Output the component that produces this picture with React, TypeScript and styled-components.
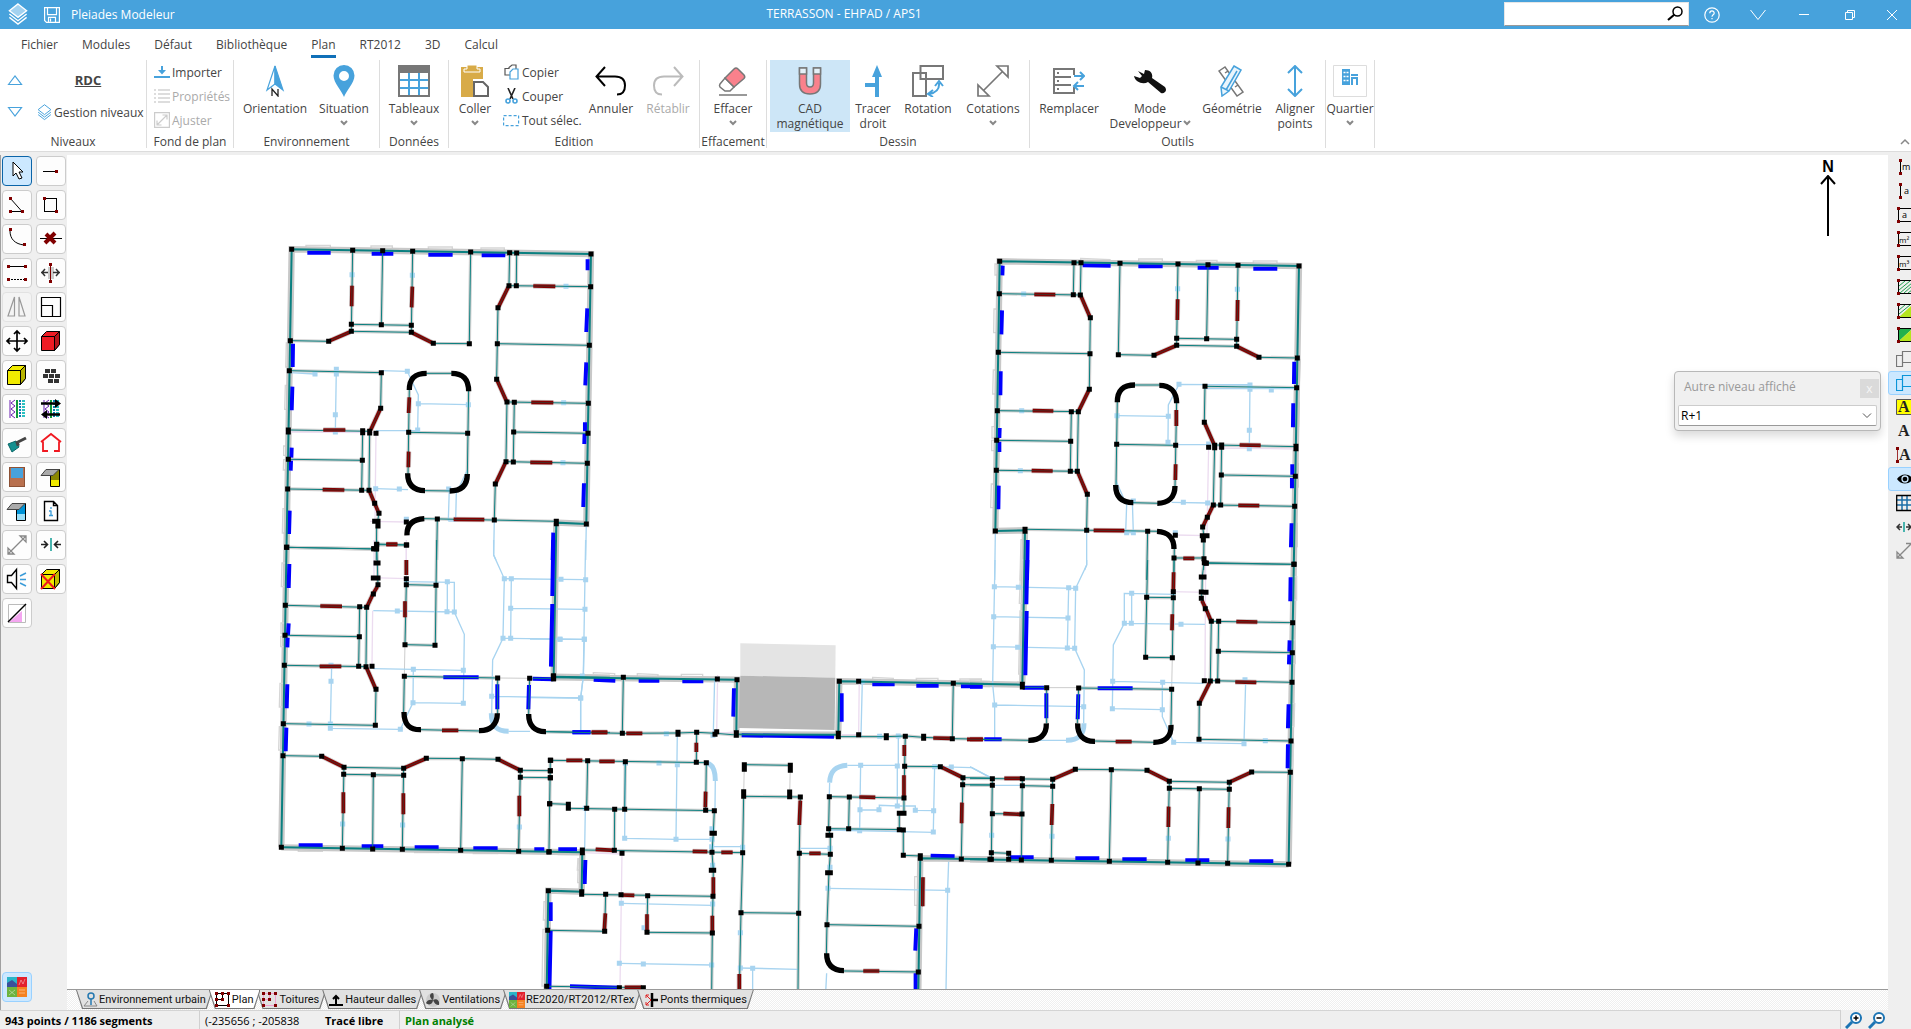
import React from "react";
import styled, { createGlobalStyle, css } from "styled-components";

const BLUE = "#47a2dc";
const GREY = "#777";
const TEAL = "#0a8080";

const Global = createGlobalStyle`
  html, body, #root { height: 100%; }
  body { margin: 0; overflow: hidden; background: #fff; }
  * { box-sizing: border-box; }
  button, input, select { font: inherit; color: inherit; }
`;

const Shell = styled.div`
  height: 100%;
  display: flex;
  flex-direction: column;
  font: 12px/15px "Open Sans", "Noto Sans", sans-serif;
  color: #444;
`;

/* ---------- title bar ---------- */

const TitleBar = styled.header`
  display: flex;
  height: 29px;
  flex: none;
  background: ${BLUE};
  color: #fff;
  overflow: hidden;
`;
const TitleLeft = styled.div`
  width: 184px;
  display: flex;
  align-items: center;
  padding-left: 8px;
  svg { margin-right: 16px; }
  svg + svg { margin-right: 11px; }
`;
const DocTitle = styled.h1`
  flex: 1;
  margin: 0;
  font-size: 12px;
  font-weight: 400;
  line-height: 28px;
  text-align: center;
`;
const SearchBox = styled.label`
  width: 185px;
  height: 24px;
  margin-top: 2px;
  display: flex;
  align-items: center;
  background: #fff;
  border: 1px solid #e6e6e6;
  border-bottom-color: #999;
  padding-right: 5px;
`;
const SearchInput = styled.input`
  flex: 1;
  min-width: 0;
  border: 0;
  outline: 0;
  background: transparent;
  color: #222;
`;
const TitleButton = styled.button<{ $w?: number }>`
  width: ${(p) => p.$w ?? 46}px;
  border: 0;
  padding: 0;
  background: none;
  display: flex;
  align-items: center;
  justify-content: center;
`;

/* ---------- menu ---------- */

const Menu = styled.nav`
  display: flex;
  flex: none;
  height: 29px;
  padding: 6px 0 0 21px;
  gap: 24px;
`;
const MenuItem = styled.button<{ $on?: boolean }>`
  border: 0;
  border-bottom: 3px solid ${(p) => (p.$on ? "#1070b8" : "transparent")};
  background: none;
  padding: 2px 0 3px;
  line-height: 15px;
`;

/* ---------- ribbon ---------- */

const Ribbon = styled.section`
  display: flex;
  flex: none;
  height: 97px;
  padding: 2px 0 5px;
  background: #fff;
  border-bottom: 3px solid #efefef;
  box-shadow: inset 0 -1px #dcdcdc;
`;
const Group = styled.div<{ $w: number }>`
  width: ${(p) => p.$w}px;
  height: 88px;
  border-right: 1px solid #ddd;
  display: flex;
  flex-direction: column;
`;
const GroupBody = styled.div<{ $pad?: number }>`
  display: flex;
  flex: none;
  height: 72px;
  padding-left: ${(p) => p.$pad ?? 0}px;
`;
const GroupName = styled.div`
  text-align: center;
  line-height: 20px;
  white-space: nowrap;
`;
const BigButton = styled.button<{ $w: number; $on?: boolean; $off?: boolean }>`
  width: ${(p) => p.$w}px;
  height: 72px;
  border: 0;
  padding: 5px 0 0;
  display: flex;
  flex-direction: column;
  align-items: center;
  gap: 4px;
  white-space: pre;
  background: ${(p) => (p.$on ? "#cde6f7" : "none")};
  color: ${(p) => (p.$off ? "#aaa" : "inherit")};
  > svg { flex: none; }
`;
const Caption = styled.span`
  display: flex;
  flex-direction: column;
  align-items: center;
  line-height: 15px;
  svg { margin-top: 4px; }
`;
const CaptionRow = styled.span`
  display: flex;
  gap: 1px;
`;
const SmallList = styled.div<{ $w?: number; $pad?: number }>`
  width: ${(p) => (p.$w ? p.$w + "px" : "auto")};
  padding-left: ${(p) => p.$pad ?? 0}px;
  display: flex;
  flex-direction: column;
`;
const SmallButton = styled.button<{ $off?: boolean }>`
  height: 24px;
  border: 0;
  background: none;
  padding: 0;
  display: flex;
  align-items: center;
  gap: 2px;
  white-space: nowrap;
  color: ${(p) => (p.$off ? "#aaa" : "inherit")};
  svg { flex: none; }
`;
const LevelGrid = styled.div`
  display: grid;
  grid-template-columns: 30px 1fr;
  grid-template-rows: 40px 24px;
  width: 100%;
  align-items: center;
  justify-items: center;
`;
const LevelName = styled.strong`
  text-decoration: underline;
  font-size: 13px;
`;
const LevelLeft = styled(SmallButton)`
  justify-self: start;
  padding-left: 7px;
`;
const PlainButton = styled.button`
  border: 0;
  padding: 0;
  background: none;
  display: flex;
`;
const Collapse = styled(PlainButton)`
  margin-left: auto;
  align-self: flex-end;
  padding: 0 1px 1px 0;
`;

/* ---------- work area ---------- */

const Work = styled.main`
  flex: 1;
  min-height: 0;
  display: flex;
  background: #efefef;
`;
const LeftBar = styled.aside`
  width: 67px;
  flex: none;
  display: flex;
  flex-direction: column;
  justify-content: space-between;
  padding: 1px 1px 8px 1px;
  border-left: 1px solid #a0a0a0;
`;
const ToolGrid = styled.div`
  display: grid;
  grid-template-columns: 30px 30px;
  gap: 4px;
`;
const Tool = styled.button<{ $on?: boolean; $off?: boolean }>`
  width: 30px;
  height: 30px;
  padding: 0;
  border: 1px solid ${(p) => (p.$on ? "#0a64a8" : p.$off ? "#e2e2e2" : "#ccc")};
  border-radius: 4px;
  background: ${(p) => (p.$on ? "#cce8ff" : p.$off ? "#f4f4f4" : "#fdfdfd")};
  display: flex;
  align-items: center;
  justify-content: center;
  svg { flex: none; }
`;
const PictureTool = styled(Tool)`
  border-color: #99d1ff;
`;
const Center = styled.div`
  flex: 1;
  min-width: 0;
  display: flex;
  flex-direction: column;
`;
const Canvas = styled.div`
  flex: 1;
  min-height: 0;
  position: relative;
  overflow: hidden;
  background: #fff;
`;
const Drawing = styled.svg`
  display: block;
  width: 100%;
  height: 100%;
`;
const North = styled.div`
  position: absolute;
  top: 4px;
  right: 50px;
  width: 20px;
  display: flex;
  flex-direction: column;
  align-items: center;
  font: bold 16px/16px "Liberation Sans", Arial, sans-serif;
  color: #000;
`;
const Panel = styled.section`
  position: absolute;
  top: 216px;
  right: 7px;
  width: 207px;
  padding: 7px 3px 4px;
  background: #f0f0f0;
  border: 1px solid #b8b8b8;
  border-radius: 4px;
  box-shadow: 0 5px 10px rgba(0, 0, 0, 0.15);
`;
const PanelHead = styled.div`
  display: flex;
  justify-content: space-between;
  color: #999;
  padding: 0 2px 0 6px;
  height: 26px;
`;
const PanelTitle = styled.label`
  line-height: 16px;
`;
const PanelClose = styled.button`
  width: 19px;
  height: 19px;
  margin-right: -4px;
  border: 0;
  padding: 0;
  background: #dadada;
  color: #f6f6f6;
  line-height: 15px;
`;
const SelectWrap = styled.div`
  display: flex;
  align-items: center;
  height: 21px;
  background: #fff;
  border: 1px solid #ccc;
  border-bottom-color: #999;
  border-radius: 2px;
  padding-right: 4px;
`;
const Select = styled.select`
  appearance: none;
  flex: 1;
  border: 0;
  outline: 0;
  background: transparent;
  padding: 0 2px;
  color: #000;
`;
const RightBar = styled.aside`
  width: 23px;
  flex: none;
  overflow: hidden;
  display: flex;
  flex-direction: column;
`;
const Option = styled.button<{ $on?: boolean }>`
  width: 34px;
  height: 24px;
  flex: none;
  padding: 0 0 0 7px;
  border: 1px solid transparent;
  border-radius: 3px;
  background: none;
  display: flex;
  align-items: center;
  ${(p) => p.$on && css`background: #cce8ff; border-color: #99d1ff;`}
`;

/* ---------- tabs and status ---------- */

const TabStrip = styled.div`
  height: 21px;
  flex: none;
  display: flex;
  align-items: flex-start;
  padding-left: 9px;
  border-top: 1px solid #999;
  background: repeating-conic-gradient(#fff 0 25%, #efefef 0 50%) 0 0 / 2px 2px;
`;
const Tab = styled.button<{ $on?: boolean }>`
  position: relative;
  z-index: ${(p) => (p.$on ? 2 : 1)};
  isolation: isolate;
  height: 19px;
  border: 0;
  padding: 0 7px 0 6px;
  margin-right: -4px;
  background: none;
  color: #111;
  font: 11px/15px Roboto, "Open Sans", sans-serif;
  display: flex;
  align-items: center;
  gap: 1px;
  white-space: nowrap;
  &::before, &::after {
    content: "";
    position: absolute;
    inset: 0;
    z-index: -2;
    background: #777;
    clip-path: polygon(0 0, 100% 0, calc(100% - 6px) 100%, 6px 100%);
  }
  &::after {
    inset: 0 1px 1px 1px;
    z-index: -1;
    background: ${(p) => (p.$on ? "#fff" : "#e1e1e1")};
  }
`;
const StatusBar = styled.footer`
  height: 19px;
  flex: none;
  display: flex;
  background: #efefef;
  color: #000;
`;
const StatusCell = styled.div<{ $w?: number; $bold?: boolean; $green?: boolean; $rule?: boolean }>`
  ${(p) => (p.$w ? `width: ${p.$w}px;` : "flex: 1;")}
  border-top: 1px solid #d4d4d4;
  border-right: ${(p) => (p.$rule ? "1px solid #d0d0d0" : "0")};
  padding-left: 5px;
  line-height: 19px;
  font-size: 11px;
  white-space: nowrap;
  overflow: hidden;
  font-weight: ${(p) => (p.$bold ? 700 : 400)};
  color: ${(p) => (p.$green ? "#008000" : "inherit")};
`;
const StatusZoom = styled.div`
  display: flex;
  gap: 6px;
  align-items: center;
  padding: 1px 18px 0 4px;
  width: 70px;
`;

/* ---------- floor plan drawing ---------- */

type Sector = {
  at: [number, number];
  thick?: string;
  thin?: string;
  doors?: string;
  windows?: string;
  frames?: string;
  arcs?: string;
  ghost?: string;
  ghostArcs?: string;
  ghostNodes?: string;
  pink?: string;
  faint?: string;
  nodes?: string;
};

/* Each sector is drawn in thirds of a pixel from its own origin. */
const sectors: Sector[] = [
  {
    at: [203, 75],
    thick: "M34 1852L65 58L963 72L949 882L859 878L851 1342",
    thin: "M248 61L244 304M338 62L334 284M428 64L424 307M602 67L598 341M244 283L424 286M61 332L176 334L244 304L424 307L490 340L598 341M719 68L717 167M740 69L739 167M717 167L962 170M717 167L684 233L682 341L680 448L711 516L708 695L676 762L673 870M682 341L958 346M711 516L955 520M733 517L730 696M731 606L954 610M708 695L952 700M459 866L859 874M502 867L500 990M58 422L334 428L332 535L299 604L297 781L314 820L327 850L320 890L319 990M55 600L299 604M278 603L275 781M55 688L277 691M53 777L297 781M50 952L318 957M320 942L410 945M465 430H545M418 475L414 740M596 475L592 740M460 782L545 783M416 607L593 610",
    doors: "M246 167L245 229M427 170L425 232M180 332L240 306M428 309L486 338M715 171L686 230M790 168L856 169M682 452L709 512M784 517L850 518M781 697L847 698M706 699L678 758M330 539L302 600M160 600L226 600M158 779L223 780M299 785L325 846M418 502L416 549M416 665L415 712M551 868L643 869M349 943L382 943",
    windows: "M112 68H182M305 71H370M475 74H548M635 76H706M953 88V121M952 235L949 306M949 397L946 466M945 577V604M944 610L943 642M942 760L940 831M69 341L68 411M67 470L65 541M65 653L64 683M63 692L62 722M59 842L57 912M850 908L848 990",
    frames: "M108 46H181V58H108ZM303 48H367V60H303ZM475 51H547V63H475ZM633 54H703V66H633ZM49 339H60L57 411H47ZM46 466H57L55 538H44ZM41 648H54V676H41ZM41 689H53V720H40ZM39 836H52L49 909H37Z",
    arcs: "M470 430C435 430 418 445 418 480M544 430C580 430 596 448 596 484M413 730C413 765 430 782 465 782M592 732C592 765 575 783 539 783M463 866C426 868 410 885 411 916",
    ghost: "M199 418L196 606M60 428L134 432M334 422L412 424L445 495L443 600M445 521L595 524M443 602L318 602M317 776L414 779M538 777L535 873M559 790L557 873H535M592 720L559 790M673 870L671 975L678 990M949 882L947 990",
    ghostNodes: "246,134 427,136 888,169 199,418 199,432 135,432 412,424 196,554 445,521 443,600 595,524 881,518 879,698 388,777 317,776 536,777 409,868 409,873 196,606",
    pink: "M318 608L315 875M45 606L318 608M300 874L409 876M409 945V990",
    nodes: "65,58 248,61 338,62 428,64 602,66 719,68 740,69 963,72 717,167 739,167 962,170 244,283 334,284 424,286 244,304 424,307 61,332 176,334 490,340 598,341 684,233 682,341 958,346 680,448 711,516 733,517 955,520 731,606 954,610 708,695 730,696 952,700 676,762 673,870 859,874 859,881 949,882 502,867 58,422 334,428 332,535 278,602 278,608 299,604 299,609 318,610 55,600 55,606 55,688 277,691 53,777 275,781 297,781 314,820 327,850 314,874 324,874 324,888 409,876 50,952 320,943 312,956 319,957 410,945 416,607 593,610",
  },
  {
    at: [203, 385],
    thick: "M34 922L937 937M851 410L1020 413",
    thin: "M50 22L318 27M320 14L409 15M320 0L322 69L324 134L290 202L288 379L318 448L316 556M46 196L290 202M269 200L266 379M45 286L268 290M43 376L288 380M40 551L316 556M409 116V134L405 314L495 316M409 134L498 136M500 0L496 316M403 409L683 414V530M403 409L401 520M450 569L630 573M779 415L776 525M825 575L1020 578M788 415H851M39 647L155 649L222 682L401 685L469 655L577 656L684 658L751 691L841 692M221 703L401 706M751 712L841 713M222 682L217 925M310 704L308 927M401 685L397 928M577 656L572 931M751 691L746 934M841 661L837 936",
    doors: "M349 13H382M409 60V105M405 184V232M322 140L310 160M308 164L292 198M151 198L216 199M149 379H214M290 384L316 444M516 571H565M965 577H1012M159 651L218 680M405 683L465 657M688 660L747 689M220 757V820M400 760V823M748 767V829",
    windows: "M58 72L56 144M56 250L54 285M53 293L52 322M52 433L50 505M49 563L47 634M850 0L847 168M847 192L843 380M520 412H626M788 416L850 418M682 433V508M777 435L775 508M908 577H962M86 916H158M275 919H340M434 922H506M610 925H683M793 928H823M865 928H921",
    frames: "M36 69H48L46 140H34ZM33 249H45V281H33ZM32 289H44V320H32ZM30 430H43L40 501H28ZM28 560H40L38 630H26ZM85 924H157V934H85ZM434 928H506V938H434ZM610 931H683V941H610ZM865 934H921V944H865ZM924 956H936L934 990H922Z",
    arcs: "M402 516C402 555 420 570 453 569M682 520C682 555 660 573 627 572M776 522C776 558 795 576 828 575",
    ghost: "M671 0V45L703 116L945 119M703 116L699 295L668 360L665 525M724 116L722 295M699 295L943 298M722 205L945 208M947 0L940 408L932 474V570M665 469L932 474M402 125L553 127V216L583 283L580 490L429 488L430 388L580 391M310 212L553 216M532 125V216M310 386L430 388M429 488L391 568L181 565L185 376M715 574H780",
    ghostArcs: "M664 520C664 560 682 574 716 574",
    ghostNodes: "703,116 724,116 873,118 947,119 722,205 945,208 699,295 722,295 870,298 943,298 532,125 382,213 531,215 553,216 430,388 580,391 429,488 580,490 183,424 183,376 181,552 181,565 117,552 391,568 665,469 932,474 218,852 398,855 748,861 937,408",
    pink: "M312 0V114M308 212L306 380M302 113L409 116M409 0V116",
    faint: "M405 314L403 409M683 414L779 415M322 69V134",
    nodes: "50,22 311,26 320,26 320,14 409,15 318,69 324,69 310,114 324,114 324,134 310,162 409,116 409,134 498,136 46,196 269,200 290,202 45,286 268,290 43,376 266,379 288,380 306,379 318,448 40,551 316,556 405,314 495,316 403,409 683,414 779,415 851,408 851,416 39,647 155,649 222,682 401,685 469,655 577,656 684,658 751,691 841,692 841,661 221,703 310,704 401,706 751,712 841,713 839,791 34,922 217,925 308,927 397,928 572,931 746,934 837,936",
  },
  {
    at: [463, 475],
    thick: "M70 142L621 149L619 313L925 314L928 154L1380 162M157 662L155 785L55 782L50 1090M1380 688L1171 685L1165 1090",
    thin: "M45 305L277 310L444 309L500 307L558 310L619 315M280 142L277 310M500 307L499 397M62 391L529 398L527 541M173 392L170 535M286 395L284 538M59 521L114 523V535L553 542L550 610L546 667L550 721L549 799L547 909L545 1090M254 538L253 661M157 660L638 668M155 793L549 799M227 793L224 904L53 901M353 797L351 907L547 909M50 1069L340 1073M643 404L781 406M641 499L811 501L808 670L806 850L804 1090M641 499L638 668L633 848L628 1090M633 848L806 850M808 670L901 673M898 500L1122 504M958 501L956 596M898 500L896 596L1120 599M896 596L901 620V672L897 728L891 884L889 980M891 884L1167 889M940 1023L1165 1026M925 320L1069 320L1126 318L1181 322L1267 326L1380 328M1270 160L1267 326M1126 318L1122 504V550H1108V599H1120V676L1171 678M1124 409L1231 410L1299 443L1380 444M1298 464L1380 465M1299 443L1294 687M928 154H986",
    doors: "M185 307H232M289 310H337M109 391H157M208 394H254M499 338V366M527 485L526 532M197 658L253 661M488 664L532 665M574 667H608M550 742V793M547 857V907M274 795L313 796M226 850L223 902M351 853V903M284 1072H335M628 1032V1090M811 512L808 585M838 670H872M988 501L1036 502M1123 345V378M1122 436V500M1236 412L1295 441M1296 518L1295 580M1179 742L1178 829M1000 1023H1048M1210 324L1260 325M1311 328H1359",
    windows: "M191 149L256 152M326 152H388M457 154H520M612 175L610 260M635 316L912 320M935 190V275M1027 163H1094M1159 167H1226M1293 169H1357M166 690L164 762M62 817V873M62 902L58 1090M120 1069L268 1073M1159 895L1156 962M1157 1030V1090M1202 677L1274 679M127 307H181",
    frames: "M190 128L254 131V143H190ZM322 131L384 134V146H322ZM454 133H518V146H454ZM1028 142L1090 145V157H1028ZM1159 145H1224V158H1159ZM1290 147H1354V160H1290ZM145 686H155V758H143ZM42 815H52V870H40ZM39 898H48L45 1068H36ZM1154 740H1168V826H1154Z",
    arcs: "M890 970C890 1005 908 1022 942 1022",
    ghost: "M0 27L163 28L160 140L152 204V305M0 203L152 204M554 145L550 310M442 310L438 628L284 625L286 395M438 628H550M274 820L545 826M268 1000L545 1005M166 535L164 660M555 540L556 450M545 650H638M806 655H901M668 1015V1090M628 1014L804 1018M894 775L1253 781L1248 1090M1256 695L1253 781M899 458L898 500M952 406H1102V528L1048 526V540H990M992 406L989 602M896 600L1210 607L1214 410L1325 413L1380 442M1102 528H1156V541L1211 542M1105 316V406M997 155L993 320M890 1030L887 1090",
    ghostArcs: "M529 399C550 402 556 425 556 453M952 406C915 408 900 425 899 458",
    ghostNodes: "90,28 163,28 152,204 387,399 409,311 442,404 284,625 438,628 546,596 546,628 548,706 548,822 545,650 638,652 274,820 268,1000 340,1002 545,1005 342,893 631,908 631,1014 668,1015 900,655 900,712 894,775 1253,781 992,406 1102,408 990,539 1047,539 1102,528 1156,541 1211,542 1210,606 989,602 1264,411 1214,410 1049,319 1105,318 997,155 166,535 286,400 549,316",
    pink: "M563 135L560 310L619 306M988 145L986 314H925M276 670L270 1070M157 668L276 672",
    faint: "M643 404L641 499M781 406L779 499",
    nodes: "70,138 70,146 280,142 562,147 621,149 619,308 619,316 277,310 444,307 444,313 500,307 560,305 555,313 499,397 529,398 62,391 173,392 286,395 61,422 61,443 59,521 115,523 115,535 170,535 254,538 284,538 527,541 553,542 546,610 553,610 546,667 544,721 551,721 549,799 547,909 253,661 276,670 157,660 157,668 57,665 155,785 155,793 55,782 227,793 273,794 353,797 53,901 224,904 351,907 50,1069 268,1073 340,1073 638,668 643,404 643,418 781,406 781,421 641,485 641,499 779,486 779,500 811,501 808,670 633,848 806,850 901,673 894,616 902,616 893,728 901,728 898,500 958,501 1122,504 896,596 956,596 1108,599 1120,600 1108,550 1122,550 1120,676 1171,677 1171,685 1294,687 1380,688 891,884 1167,889 1165,1026 928,154 986,154 1270,160 925,310 925,320 986,314 1069,317 1069,323 1126,319 1181,319 1181,325 1267,326 1124,409 1231,410 1299,443 1298,464",
  },
  {
    at: [903, 95],
    thick: "M956 1843L987 48L89 34L76 843L165 841L157 1303",
    thin: "M312 38L310 134M333 38L331 135M88 131L331 135L361 203L358 418L325 485L322 664L352 733L350 841M85 307L360 311M82 482L325 485M304 485L301 664M80 571L302 574M79 661L322 664M450 40L445 314L552 316L620 286L800 289L867 322L982 324M624 42L620 286M714 44L710 266M804 46L800 289M620 265L800 268M165 838L568 844M705 409L980 413M705 409L703 517L734 587L730 765L698 831L702 860L701 960M755 587L752 765M734 585L978 590M754 675L976 679M730 765L974 769M708 938L972 943M612 924H702M613 890L612 990M533 844L530 990M490 405H575M442 450L438 710M620 455L615 715M480 758L570 760M440 583L617 586",
    doors: "M193 133L256 134M333 139L359 199M356 422L327 481M188 482L250 483M185 662L248 663M324 668L350 729M371 841L463 842M623 148L622 210M803 150L802 213M556 314L616 288M804 291L863 320M619 480V528M617 643L616 690M705 521L732 583M809 585L872 586M805 766L868 767M728 769L713 800M711 804L700 827M640 925H673",
    windows: "M98 47L97 76M96 181L94 253M92 364L91 436M89 534L88 564M88 575V606M86 707L85 778M338 46L422 47M505 49H578M683 53H746M850 56H922M973 335L972 402M970 460L969 532M967 643V674M966 684V715M965 820L963 892M173 870L171 990",
    frames: "M75 42H87V75H75ZM72 177H85L83 248H71ZM70 360H82L80 432H68ZM66 530H78V564H66ZM65 571H78V602H65ZM64 702H76L74 773H62ZM332 25L420 29V40H332ZM506 27H577V40H506ZM679 31H741V43H679ZM850 33H921V45H850ZM981 328H991L988 400H978ZM976 459H988L986 529H976ZM974 640H985V711H974ZM970 820H982V890H970ZM153 869H164L160 990H150Z",
    arcs: "M495 405C460 405 442 420 442 457M568 406C600 406 620 425 620 460M437 705C437 740 455 758 490 758M615 708C615 742 595 760 562 760M561 844C595 846 612 862 612 897",
    ghost: "M441 497L595 499M840 405L838 600M840 405L627 403L595 465L594 577M617 584H716M605 757L713 759M76 850L74 990M350 841V945L344 960M470 765L467 848H490L487 750M437 690L470 765M740 404H840M705 416L980 416",
    ghostNodes: "161,132 155,482 151,662 623,116 802,118 441,497 595,499 627,403 840,405 840,418 904,420 838,541 838,596 594,577 640,757 713,759 716,582 490,753 616,848 470,848 490,848",
    pink: "M716 592L711 850M711 857L616 855M734 594L985 597M614 930V990M705 945V990",
    nodes: "89,34 312,38 333,38 450,40 624,42 714,44 804,46 987,48 88,131 310,134 331,135 361,203 360,311 85,307 445,314 552,316 620,265 710,266 800,268 620,286 800,289 867,322 982,324 358,418 82,482 304,485 325,485 80,571 302,574 79,661 301,664 322,664 352,733 350,841 76,843 165,838 165,844 533,844 705,409 980,413 703,517 734,586 734,593 755,585 755,592 716,592 978,589 978,596 754,675 976,679 730,765 752,765 974,769 712,802 698,831 697,857 711,857 700,870 616,856 612,924 702,926 708,939 972,943 440,583 617,586",
  },
  {
    at: [903, 405],
    thick: "M0 371L157 374M0 898L956 913",
    thin: "M708 10L972 13M703 0L697 50L696 96L694 115L724 184L721 364L688 430L687 538L963 543M724 184L968 188M746 184L743 363M745 274L967 278M721 362L966 367M533 0L526 292L607 293M530 112L610 113L607 293M612 0L610 113M158 382H230V490M326 384L605 388L603 500M326 384L322 490M370 543L555 547M0 538L180 541M0 655L248 658L316 628L424 629L531 631L598 664L778 667L845 636L961 637M67 656L64 898M157 656L154 900M248 658L244 901M424 629L418 904M598 664L593 907M688 686L684 909M778 667L773 910M598 685L778 688M67 761L156 762M64 878L116 880V898M0 675H67M157 677L248 679",
    doors: "M611 37L610 91M607 163L606 211M696 122L706 143M709 149L722 180M799 185L862 186M796 366L859 367M719 368L690 426M0 538H38M437 545H485M103 655H157M100 761L150 763M252 656L312 630M535 633L594 662M782 665L841 638M247 732L245 795M596 740L595 801M776 742L775 804",
    windows: "M172 0L169 133M170 153L166 346M0 380H38M158 383H222M229 400V475M325 403L323 478M383 385H488M43 538H95M962 52L961 124M959 241L958 275M958 284L957 313M956 433L954 505M954 553L953 625M119 892H191M316 895H388M457 898H530M646 901H718M838 904H910",
    frames: "M153 0H160L157 130H148ZM150 153H161L156 342H146ZM0 358H33V370H0ZM968 50H980V120H968ZM964 240H976V311H964ZM961 431H974L972 500H961ZM959 550H971L968 622H959ZM838 906H910V918H838ZM457 900H530V912H457Z",
    arcs: "M229 490C230 525 210 542 175 541M323 490C322 525 340 545 375 544M603 495C605 530 585 548 550 547",
    ghost: "M75 0L70 260L68 373L74 435V535M73 80L317 85L314 265L343 330L341 490M71 170L294 174M70 260L314 265M296 83L292 264M350 0V15L317 85M74 435L341 440M617 103L463 100V190L430 255L427 446L577 449V367M428 364L700 370M463 190L705 193M485 100V190M577 449V470L611 547L822 551L827 367M0 620L67 655M67 676H157M210 541H290",
    ghostArcs: "M342 490C342 525 325 542 288 541",
    ghostNodes: "73,80 145,82 296,83 317,85 71,170 294,174 70,260 143,262 292,264 314,265 485,100 463,190 484,190 633,193 428,364 578,367 427,446 577,449 74,435 341,440 611,547 822,551 886,542 65,826 246,829 595,835 774,837 825,359",
    pink: "M707 0L705 360M600 95L715 97",
    faint: "M607 293L605 388M230 383H326",
    nodes: "703,8 709,10 972,13 694,51 702,51 694,96 708,97 694,115 706,146 610,95 610,113 530,112 724,184 746,184 968,188 745,274 967,278 703,362 721,363 743,363 966,367 688,430 687,538 963,543 527,292 607,293 605,388 326,384 230,383 157,373 157,381 67,656 157,656 248,658 316,628 424,629 531,631 598,664 778,667 845,636 961,637 67,676 157,677 248,679 598,685 688,686 778,688 67,761 156,762 64,878 116,880 64,898 116,898 154,900 244,901 418,904 593,907 684,909 773,910 956,913",
  },
];

const squares = (list: string) =>
  list.split(" ").map((p) => `M${p.replace(",", " ")}h0.1`).join("");

const each = (draw: (s: Sector) => React.ReactNode) =>
  sectors.map((s, i) => (
    <g key={i} transform={`translate(${s.at[0]} ${s.at[1]}) scale(0.3333)`}>{draw(s)}</g>
  ));

const FloorPlan = () => (
  <Drawing fill="none" role="img" aria-label="Plan du niveau">
    {each((s) => (
      <>
        <path d={s.frames} stroke="#d6d6d6" strokeWidth="4" />
        <path d={s.thick} stroke="#c8c8c8" strokeWidth="19" />
        <path d={s.thin} stroke="#d0d0d0" strokeWidth="10" />
        <path d={s.doors} stroke="#d0d0d0" strokeWidth="16" />
        <path d={s.faint} stroke="#ccc" strokeWidth="3" />
        <path d={s.pink} stroke="#ecdcf0" strokeWidth="4" />
      </>
    ))}
    <g transform="translate(463 475) scale(0.3333)">
      <path d="M631 40L917 46L916 143L631 137Z" fill="#e4e4e4" />
      <path d="M631 137L916 143L914 300L625 294Z" fill="#b7b7b7" />
    </g>
    {each((s) => (
      <>
        <path d={s.ghost} stroke="#a8d4f0" strokeWidth="4" />
        <path d={s.ghostArcs} stroke="#a8d4f0" strokeWidth="15" />
        {s.ghostNodes && <path d={squares(s.ghostNodes)} stroke="#a8d4f0" strokeWidth="15" strokeLinecap="square" />}
      </>
    ))}
    {each((s) => (
      <>
        <path d={s.windows} stroke="#0000ff" strokeWidth="12" />
        <path d={s.thin} stroke={TEAL} strokeWidth="3" />
        <path d={s.doors} stroke="#840000" strokeWidth="11" />
        <path d={s.doors} stroke="#4a2c26" strokeWidth="3" />
        <path d={s.thick} stroke={TEAL} strokeWidth="6" />
      </>
    ))}
    {each((s) => (
      <>
        <path d={s.arcs} stroke="#000" strokeWidth="16" />
        {s.nodes && <path d={squares(s.nodes)} stroke="#000" strokeWidth="15" strokeLinecap="square" />}
      </>
    ))}
  </Drawing>
);

/* ---------- icons ---------- */

type IconProps = { w: number; h?: number; children: React.ReactNode; sw?: number; c?: string; vb?: string };
const Icon = ({ w, h = w, children, sw = 2, c = GREY, vb }: IconProps) => (
  <svg width={w} height={h} viewBox={vb ?? `0 0 ${w} ${h}`} fill="none" stroke={c} strokeWidth={sw} aria-hidden="true">
    {children}
  </svg>
);
const Chevron = () => (
  <Icon w={8} h={6} c="#888"><path d="M1 1l3 3 3-3" /></Icon>
);
const Layers = ({ w, c, fill }: { w: number; c: string; fill: string }) => (
  <Icon w={w} h={Math.round(w * 1.15)} vb="0 0 20 24" c={c} sw={1.4}>
    <path d="M10 1l9 7-9 7-9-7z" fill={fill} />
    <path d="M1 11.500l9 7 9-7M1 15l9 7 9-7" />
  </Icon>
);

const Dots = ({ p }: { p: string }) => (
  <g fill="#800000" stroke="none">
    {p.split(" ").map((q) => {
      const [x, y] = q.split(",").map(Number);
      return <rect key={q} x={x - 1} y={y - 1} width="3" height="3" />;
    })}
  </g>
);
const Cube = ({ a, b }: { a: string; b: string }) => (
  <g strokeWidth="1">
    <path d="M5.500 10.500l5-5h13v13l-5 6h-13z" fill={a} />
    <path d="M18.500 10.500l5-5v13l-5 6z" fill={b} />
    <path d="M5.500 10.500h13v14M18.500 10.500l5-5" />
  </g>
);
const Layered = () => (
  <g strokeWidth="2">
    <path d="M8 6v18" stroke="#6a1fb0" strokeWidth="1" />
    <path d="M13 6l-4 3 4 3-4 3 4 3-4 3 4 3" stroke="#6a1fb0" strokeWidth="1" />
    <path d="M15 6v18" stroke="#129a3a" />
    <path d="M18 6v18" stroke="#0b7bb5" strokeDasharray="2 1" />
    <path d="M21.500 6v18" stroke="#2bc0c0" strokeWidth="3" strokeDasharray="2 1" />
  </g>
);
const Awning = ({ a, b }: { a: string; b: string }) => (
  <g strokeWidth="1">
    <path d="M14.500 7.500h9v17h-9z" fill={a} />
    <path d="M15 8h8v10h-8z" fill={b} stroke="none" />
    <path d="M10 7.500h13l-6 6H5z" fill="#aaa" stroke="#444" />
  </g>
);

const tools: { name: string; on?: boolean; off?: boolean; art: React.ReactNode }[] = [
  { name: "Sélection", on: true, art: <path d="M11 6v14l3-3 3 6 3-1-3-6h4z" fill="#fff" strokeWidth="1" /> },
  { name: "Segment", art: <><path d="M7 15.500h14" strokeWidth="1" /><Dots p="20,15" /></> },
  { name: "Angle", art: <><path d="M8 8l12 13.500H8" strokeWidth="1" /><Dots p="8,8 8,21 20,21" /></> },
  { name: "Rectangle", art: <><rect x="8.500" y="8.500" width="12" height="13" strokeWidth="1" /><Dots p="8,8 20,21" /></> },
  { name: "Arc", art: <><path d="M8 7c0 8 5 13 14 14" strokeWidth="1" /><Dots p="8,5 22,20" /></> },
  { name: "Supprimer", art: <><path d="M4 14.500h22" strokeWidth="1" /><path d="M10 10l9 9M19 9L9 19" stroke="#800000" strokeWidth="4" /></> },
  { name: "Parallèle", art: <><path d="M6 8.500h17" strokeWidth="1" /><path d="M6 21.500h17" strokeWidth="1" strokeDasharray="2 1" /><Dots p="6,8 23,8 6,21 23,21" /></> },
  { name: "Déplacer segment", art: <><rect x="12" y="9" width="6" height="12" fill="#ccc" stroke="none" /><path d="M14.500 6v18" stroke="#800000" strokeWidth="1" /><path d="M5 14.500h7M9 11l-3 3.500 3 3.500M17 14.500h7M20 11l3 3.500-3 3.500" strokeWidth="1.500" stroke="#333" /><Dots p="14,6 14,23" /></> },
  { name: "Symétrie", off: true, art: <g stroke="#999" strokeWidth="1.200"><path d="M12.500 5v19H6zM17 5v19h6z" fill="#f4f4f4" /></g> },
  { name: "Échelle", art: <path d="M5.500 5.500h19v19h-19zM5.500 13.500h11v11" strokeWidth="1.200" /> },
  { name: "Déplacer", art: <path d="M5 15h20M15 5v20M8 12l-3 3 3 3M22 12l3 3-3 3M12 8l3-3 3 3M12 22l3 3 3-3" strokeWidth="1.700" /> },
  { name: "Volume rouge", art: <Cube a="#ee1c24" b="#b5141a" /> },
  { name: "Volume jaune", art: <Cube a="#f0ea00" b="#b8b400" /> },
  { name: "Briques", art: <g fill="#333" stroke="none"><path d="M9 9h5v4H9zM15 9h5v4h-5zM7 14h5v4H7zM13 14h5v4h-5zM19 14h5v4h-5zM12 19h5v4h-5zM18 19h5v4h-5z" /></g> },
  { name: "Composition", art: <Layered /> },
  { name: "Inverser", art: <><Layered /><path d="M5 9.500h17M24 20.500H8" strokeWidth="2.500" /><path d="M19 5l6 4.500-6 4.500zM11 16l-6 4.500 6 4.500z" fill="#000" stroke="none" /></> },
  { name: "Pinceau", art: <><path d="M6 16l8-3 3 6-7 5z" fill="#159090" stroke="#0a6868" strokeWidth="1" /><path d="M14 16l3-1" stroke="#444" strokeWidth="5" /><path d="M16 14l8-4" stroke="#444" strokeWidth="3" /></> },
  { name: "Toit", art: <path d="M5 14l10-8 10 8M7 13.500V23h5M18 23h5v-9.500" stroke="#f01820" strokeWidth="1.800" /> },
  { name: "Porte", art: <><rect x="7.500" y="5.500" width="15" height="19" fill="#b8704e" stroke="#8d5236" strokeWidth="1" /><rect x="9" y="6" width="12" height="10" fill="#47a2dc" stroke="none" /></> },
  { name: "Casquette jaune", art: <Awning a="#f0ea00" b="#8a8700" /> },
  { name: "Casquette bleue", art: <Awning a="#9be0fa" b="#0094d8" /> },
  { name: "Information", art: <><path d="M8.500 5.500h9l4 4v15h-13zM17.500 5.500v4h4" strokeWidth="1.400" /><path d="M15 11v2M15 14.500v5M13 15h2M13 19.500h4" stroke="#3a9bd8" strokeWidth="1.300" /></> },
  { name: "Cotation", art: <path d="M6 24L24 6M18 6h6v6zM6 18v6h6z" stroke="#888" strokeWidth="1.300" fill="#fff" /> },
  { name: "Centrer", art: <><path d="M5 14.500h6M8 11l3.500 3.500L8 18M25 14.500h-6M22 11l-3.500 3.500L22 18" strokeWidth="1.600" stroke="#222" /><path d="M15 8v13" stroke="#49b4ae" /></> },
  { name: "Acoustique", art: <><path d="M5.500 11.500h4l5-6v19l-5-6h-4z" strokeWidth="1.400" /><path d="M18 12l6-3M18 15.500h6M18 19l6 3" stroke="#3a9bd8" strokeWidth="1.500" /></> },
  { name: "Volume exclu", art: <><Cube a="#f0ea00" b="#c0bc00" /><path d="M5 10l14 15M19 10L5 25" stroke="#f01820" /></> },
  { name: "Dégradé", art: <><path d="M6.500 6.500h17v18h-17z" stroke="#bbb" strokeWidth="1" fill="#fff" /><path d="M7 24L20 13v11z" fill="#f4a6f0" stroke="none" /><path d="M6 24L24 6" strokeWidth="1.500" /></> },
];

const Box = () => <><path d="M2.500 3.500h14v13h-14z" strokeWidth="1" /><Dots p="2,3 16,3 2,16 16,16" /></>;
const Letters = styled.text<{ $small?: boolean }>`
  font: ${(p) => (p.$small ? 8 : 9)}px "Open Sans", sans-serif;
  fill: #000;
  stroke: none;
`;
const SerifA = styled.text`
  font: bold 16px "Liberation Serif", serif;
  fill: #222;
  stroke: none;
`;
const Rooms = ({ c }: { c: string }) => <path d="M6.500 2.500h14v11h-14zM6.500 6.500h-6v11h6v-4" stroke={c} strokeWidth="1.200" />;
const options: { name: string; on?: boolean; art: React.ReactNode }[] = [
  { name: "Longueurs", art: <><path d="M4.500 3v13" strokeWidth="1" /><Dots p="4,3 4,16" /><Letters x="6" y="13">m</Letters></> },
  { name: "Noms", art: <><path d="M4.500 3v13" strokeWidth="1" /><Dots p="4,3 4,16" /><Letters x="8" y="13">a</Letters></> },
  { name: "Noms des pièces", art: <><Box /><Letters x="6" y="13">a</Letters></> },
  { name: "Surfaces", art: <><Box /><Letters x="3" y="14" $small>m²</Letters></> },
  { name: "Volumes", art: <><Box /><Letters x="3" y="14" $small>m³</Letters></> },
  { name: "Hachures", art: <><path d="M3 9l6-5M3 13L14 4M4 16L16 6M8 16l8-7M12 16l4-3" stroke="#20a050" strokeWidth="1" /><Box /></> },
  { name: "Hachures zones", art: <><path d="M3 9l6-5M3 13L14 4" stroke="#20a050" strokeWidth="1" /><path d="M3 16L16 4v12z" fill="#b4e61d" stroke="none" /><Box /></> },
  { name: "Zones", art: <><path d="M3 4h13L3 16z" fill="#22b14c" stroke="none" /><path d="M3 16L16 4v12z" fill="#b4e61d" stroke="none" /><Box /></> },
  { name: "Niveau inférieur", art: <Rooms c="#777" /> },
  { name: "Autre niveau", on: true, art: <Rooms c="#0a94d8" /> },
  { name: "Texte surligné", art: <><path d="M.5 2.500h18v15H.5z" fill="#ff0" stroke="#555" strokeWidth="1" /><SerifA x="2" y="15">A</SerifA></> },
  { name: "Texte", art: <SerifA x="2" y="15">A</SerifA> },
  { name: "Hauteur de texte", art: <><path d="M1.500 3v14" stroke="#a03030" strokeWidth="1" /><Dots p="1,3 1,16" /><SerifA x="3" y="15">A</SerifA></> },
  { name: "Affichage", on: true, art: <><path d="M1 10c4-6 12-6 16 0-4 6-12 6-16 0z" fill="#000" stroke="none" /><circle cx="9" cy="10" r="3" stroke="#cce8ff" strokeWidth="1.300" /></> },
  { name: "Grille", art: <><path d="M.5 7h17M.5 12h17M6 3v14M11 3v14" stroke="#1c6fa8" strokeWidth="1.500" /><path d="M.7 2.500h17v15H.7z" strokeWidth="1.300" /></> },
  { name: "Écarter", art: <><path d="M1 10h5M4 7l-3 3 3 3M10 10h5M12 7l3 3-3 3" stroke="#333" strokeWidth="1.500" /><path d="M8 5v10" stroke="#49b4ae" /></> },
  { name: "Cotations", art: <path d="M1 17L16 2M10 2.500h6v6M1 11v6h6z" stroke="#888" strokeWidth="1.300" /> },
];

const Mosaic = ({ w }: { w: number }) => (
  <Icon w={w} vb="0 0 20 20" sw={0}>
    <path d="M0 0h10v10H0z" fill="#2bb5c8" /><path d="M0 6l5-3 5 4v3H0z" fill="#3a4f9a" />
    <path d="M10 0h10v10H10z" fill="#e3202c" /><path d="M0 10h10v10H0z" fill="#6db33f" /><path d="M10 10h10v10H10z" fill="#f58220" />
    <path d="M12 8l2-5 2 4 2-5M2 13l6 5M2 18l6-5M12 13h6M12 16h6" stroke="#fff" strokeOpacity=".4" strokeWidth="1" />
  </Icon>
);
const PlanIcon = ({ c }: { c: string }) => (
  <Icon w={16} c={c} sw={1}>
    <path d="M1.500 1.500h12v12h-12zM1.500 7.500h6M7.500 1.500v6" />
    <Dots p="1,1 7,1 13,1 1,7 7,7 1,13 13,13" />
  </Icon>
);
const tabs: { label: string; on?: boolean; icon: React.ReactNode }[] = [
  { label: "Environnement urbain", icon: <Icon w={16} c="#2478b0" sw={1.5}><circle cx="9" cy="4" r="3" /><path d="M9 7v6" /><path d="M6 9l-4 5h13l-3-5" stroke="#888" strokeWidth="1" /></Icon> },
  { label: "Plan", on: true, icon: <PlanIcon c="#000" /> },
  { label: "Toitures", icon: <PlanIcon c="#f2a0d0" /> },
  { label: "Hauteur dalles", icon: <Icon w={16} c="#000"><path d="M1 13h14M8 12V4M5 7l3-3 3 3" /></Icon> },
  { label: "Ventilations", icon: <Icon w={16} sw={0}><circle cx="8" cy="8" r="7" fill="#ccc" /><path d="M8 8C4 6 4 1 8 1c1 2 1 4 0 7zM8 8c4-2 7 1 6 5-3 0-5-2-6-5zM8 8c0 4-4 6-7 3 1-3 4-4 7-3z" fill="#444" /></Icon> },
  { label: "RE2020/RT2012/RTex", icon: <Mosaic w={16} /> },
  { label: "Ponts thermiques", icon: <Icon w={16} c="#000" sw={2.5}><path d="M9 1v14M9 8h6" /><path d="M8 8L3 3M8 8l-5 5M3 6V3h3M3 10v3h3" stroke="#e02020" strokeWidth="1" /></Icon> },
];

const ZoomIcon = ({ plus }: { plus?: boolean }) => (
  <Icon w={17} c="#1b74b4">
    <circle cx="11" cy="6" r="5" fill="#fff" /><path d="M7 10l-6 6" strokeWidth="3" />
    <path d={plus ? "M8.500 6h5M11 3.500v5" : "M8.500 6h5"} stroke="#000" strokeWidth="1.500" />
  </Icon>
);

const ribbonMenu = ["Fichier", "Modules", "Défaut", "Bibliothèque", "Plan", "RT2012", "3D", "Calcul"];

export default function App() {
  return (
    <Shell>
      <Global />
      <TitleBar>
        <TitleLeft>
          <Layers w={20} c="#fff" fill="#a3d2f0" />
          <Icon w={16} c="#fff" sw={1.2}><path d="M.6.600h14.800v14.800H2.500l-1.900-2zM3.500.600v7h9v-7M4.500 15.400v-5h7v5M6.500 11.500v3" /></Icon>
          Pleiades Modeleur
        </TitleLeft>
        <DocTitle>TERRASSON - EHPAD / APS1</DocTitle>
        <SearchBox>
          <SearchInput type="text" aria-label="Rechercher" />
          <Icon w={16} c="#000" sw={1.5}><circle cx="10.500" cy="5.500" r="4.500" /><path d="M7.500 8.500L1 14" strokeWidth="2.200" /></Icon>
        </SearchBox>
        <TitleButton aria-label="Aide"><Icon w={16} c="#fff" sw={1.2}><circle cx="8" cy="8" r="7.200" /><path d="M5.800 6.200c0-3 4.400-3 4.400-.2 0 1.800-2.200 1.800-2.200 3.700M8 11v1.300" /></Icon></TitleButton>
        <TitleButton aria-label="Options"><Icon w={16} h={12} c="#fff" sw={1}><path d="M.5 1L8 10.500 15.500 1" /></Icon></TitleButton>
        <TitleButton aria-label="Réduire"><Icon w={10} c="#fff" sw={1}><path d="M0 4.500h10" /></Icon></TitleButton>
        <TitleButton aria-label="Restaurer"><Icon w={10} c="#fff" sw={1}><path d="M.5 2.500h7v7h-7zM2.500 2.500v-2h7v7h-2" /></Icon></TitleButton>
        <TitleButton aria-label="Fermer" $w={38}><Icon w={10} c="#fff" sw={1}><path d="M0 0l10 10M10 0L0 10" /></Icon></TitleButton>
      </TitleBar>

      <Menu>
        {ribbonMenu.map((m) => <MenuItem key={m} $on={m === "Plan"}>{m}</MenuItem>)}
      </Menu>

      <Ribbon>
        <Group $w={147}>
          <GroupBody>
            <LevelGrid>
              <PlainButton aria-label="Niveau supérieur"><Icon w={16} h={12} c={BLUE} sw={1.2}><path d="M1.500 10.500L8 2l6.500 8.500z" /></Icon></PlainButton>
              <LevelName>RDC</LevelName>
              <PlainButton aria-label="Niveau inférieur"><Icon w={16} h={12} c={BLUE} sw={1.2}><path d="M1.500 1.500L8 10l6.500-8.500z" /></Icon></PlainButton>
              <LevelLeft><Layers w={15} c={BLUE} fill="#fff" />Gestion niveaux</LevelLeft>
            </LevelGrid>
          </GroupBody>
          <GroupName>Niveaux</GroupName>
        </Group>
        <Group $w={87}>
          <GroupBody $pad={7}>
            <SmallList>
              <SmallButton><Icon w={16} c={BLUE}><path d="M0 13h16M8 2v6" /><path d="M4 6h8l-4 4.500z" fill={BLUE} stroke="none" /></Icon>Importer</SmallButton>
              <SmallButton $off><Icon w={16} c="#ddd"><path d="M0 2h2M4 2h12M0 6h2M4 6h12M0 10h2M4 10h12M0 14h2M4 14h12" /></Icon>Propriétés</SmallButton>
              <SmallButton $off><Icon w={16} c="#ccc" sw={1.2}><path d="M.6.600h14.800v14.800H.6zM3 13L13 3M8.500 3H13v4.500M3 8.500V13h4.500" /></Icon>Ajuster</SmallButton>
            </SmallList>
          </GroupBody>
          <GroupName>Fond de plan</GroupName>
        </Group>
        <Group $w={146}>
          <GroupBody $pad={1}>
            <BigButton $w={80}>
              <Icon w={20} h={32} c={BLUE} sw={1.2}><path d="M10 1L2 25l8-6z" /><path d="M10 1l8 24-8-6z" fill={BLUE} /><path d="M7 31v-7l6 7v-7" stroke="#222" strokeWidth="1.300" /></Icon>
              <Caption>Orientation</Caption>
            </BigButton>
            <BigButton $w={58}>
              <Icon w={22} h={32} sw={0}><path fillRule="evenodd" d="M11 0a10.500 10.500 0 0 0-10.500 10.500C.500 18 9 26 11 32 13 26 21.500 18 21.500 10.500A10.500 10.500 0 0 0 11 0zm0 6a5 5 0 1 1 0 10 5 5 0 0 1 0-10z" fill={BLUE} /></Icon>
              <Caption>Situation<Chevron /></Caption>
            </BigButton>
          </GroupBody>
          <GroupName>Environnement</GroupName>
        </Group>
        <Group $w={69}>
          <GroupBody>
            <BigButton $w={69}>
              <Icon w={32}><path d="M0 0h32v32H0z" fill={GREY} stroke="none" /><path d="M2 8h28v22H2z" fill="#fff" stroke="none" /><path d="M2 15h28M2 23h28M11 8v22M21 8v22" stroke={BLUE} /></Icon>
              <Caption>Tableaux<Chevron /></Caption>
            </BigButton>
          </GroupBody>
          <GroupName>Données</GroupName>
        </Group>
        <Group $w={251}>
          <GroupBody>
            <BigButton $w={52}>
              <Icon w={28} h={32}><path d="M0 2h22v12H12v18H0z" fill="#d8ab48" stroke="none" /><path d="M6 0h10v4h3v3H3V4h3z" fill="#d8ab48" stroke="#fff" strokeWidth="1" /><path d="M13 17h9l5 5v9H13z" fill="#fff" stroke="#666" /></Icon>
              <Caption>Coller<Chevron /></Caption>
            </BigButton>
            <SmallList $w={82} $pad={2}>
              <SmallButton><Icon w={17} h={16} c="#555" sw={1.2}><path d="M6 3.500L9 1h4v10H2V4.500h4z" /><path d="M7 8l3-3h5v10H7z" stroke={BLUE} fill="#fff" /></Icon>Copier</SmallButton>
              <SmallButton><Icon w={17} h={16} c="#222" sw={1.6}><path d="M5 0l5 11M12 0L7 11" /><circle cx="5" cy="13" r="2" stroke={BLUE} /><circle cx="12" cy="13" r="2" stroke={BLUE} /></Icon>Couper</SmallButton>
              <SmallButton><Icon w={17} h={16} c={BLUE} sw={1.2}><path d="M.6 3.600h15v10H.6z" strokeDasharray="3 2" /></Icon>Tout sélec.</SmallButton>
            </SmallList>
            <BigButton $w={56}>
              <Icon w={32} c="#000"><path d="M10 2L1.500 11.500 10 21M2 11.500h18c6 0 10 3 10 9s-3 9-8 9" /></Icon>
              <Caption>Annuler</Caption>
            </BigButton>
            <BigButton $w={58} $off>
              <Icon w={32} c="#bbb"><path d="M22 2l8.500 9.500L22 21M30 11.500H12c-6 0-10 3-10 9s3 9 8 9" /></Icon>
              <Caption>Rétablir</Caption>
            </BigButton>
          </GroupBody>
          <GroupName>Edition</GroupName>
        </Group>
        <Group $w={67}>
          <GroupBody>
            <BigButton $w={66}>
              <Icon w={32} sw={1.5}><path d="M3 19l5-6 9 9-4 4H8l-5-4q-1-1.500 0-3z" fill="#fff" /><path d="M8 13L17 4q2-2 4 0l6 6q1.500 2 0 3.500L17 22z" fill="#f9818c" /><path d="M2 30h28" /></Icon>
              <Caption>Effacer<Chevron /></Caption>
            </BigButton>
          </GroupBody>
          <GroupName>Effacement</GroupName>
        </Group>
        <Group $w={263}>
          <GroupBody $pad={3}>
            <BigButton $w={80} $on>
              <Icon w={32} sw={1.5}><path d="M5.500 3h7v15q0 4 3.500 4t3.500-4V3h7v16q0 10-10.500 10T5.500 19z" fill="#f9818c" /><path d="M5.500 3h7v6h-7zM19.500 3h7v6h-7z" fill="#e4f0f8" /></Icon>
              <Caption>CAD<span>magnétique</span></Caption>
            </BigButton>
            <BigButton $w={46}>
              <Icon w={20} h={32} c={BLUE}><path d="M14 32V8M2 20h12" strokeWidth="4" /><path d="M14 0l5 12H9z" fill={BLUE} stroke="none" /></Icon>
              <Caption>Tracer<span>droit</span></Caption>
            </BigButton>
            <BigButton $w={64}>
              <Icon w={32}><path d="M8.500 1h22.500v13H8.500zM1 8h13v23H1z" /><path d="M27 18q1 9-10 11M23 21l4-5 4 5M21 25l-5 4 5 3" stroke={BLUE} /></Icon>
              <Caption>Rotation</Caption>
            </BigButton>
            <BigButton $w={66}>
              <Icon w={32} sw={1.7}><path d="M1 20v11h11zM31 12V1H20zM6 26L26 6" /></Icon>
              <Caption>Cotations<Chevron /></Caption>
            </BigButton>
          </GroupBody>
          <GroupName>Dessin</GroupName>
        </Group>
        <Group $w={296}>
          <GroupBody>
            <BigButton $w={78}>
              <Icon w={32}><path d="M21 10V4H1v24h20v-6M1 12h17M1 20h17M4 8h2M4 16h2M4 24h2" /><path d="M21 11h10M27 7l4 4-4 4M31 21H21M25 17l-4 4 4 4" stroke={BLUE} /></Icon>
              <Caption>Remplacer</Caption>
            </BigButton>
            <BigButton $w={84}>
              <Icon w={32} sw={0}><path d="M4 6l6 3 1-4C17 5 19 9 18 13l13 9q2 3 0 5t-4 1L14 17C9 20 1 17 0 11l6 2 2-2z" fill="#111" /></Icon>
              <Caption>Mode<CaptionRow>Developpeur<Chevron /></CaptionRow></Caption>
            </BigButton>
            <BigButton $w={80}>
              <Icon w={32} sw={1.5}><path d="M3 6l6-4 18 25-6 4zM9 8l3-2M13 14l3-2M19 22l3-2" /><path d="M18 1l7 4-12 21-7 5-1-9z" fill="#eaf5fc" stroke={BLUE} /><path d="M5 22l8 4M21 6L10 25" stroke={BLUE} /></Icon>
              <Caption>Géométrie</Caption>
            </BigButton>
            <BigButton $w={46}>
              <Icon w={16} h={32} c={BLUE}><path d="M8 1v30M1 8l7-7 7 7M1 24l7 7 7-7" /></Icon>
              <Caption>Aligner<span>points</span></Caption>
            </BigButton>
          </GroupBody>
          <GroupName>Outils</GroupName>
        </Group>
        <Group $w={49}>
          <GroupBody>
            <BigButton $w={48}>
              <Icon w={34} h={32} sw={0}><path d="M.5.500h33v31H.5z" stroke="#ddd" strokeWidth="1" fill="#fff" /><path d="M9 4h8v16H9zM18 9h7v11h-2v-6h-3v6h-2z" fill={BLUE} /><path d="M10.500 7.500h5M10.500 11.500h5M10.500 15.500h5" stroke="#fff" strokeWidth="1.500" strokeDasharray="2 1" /><path d="M18 11.500h7" stroke="#fff" strokeWidth="1" /></Icon>
              <Caption>Quartier<Chevron /></Caption>
            </BigButton>
          </GroupBody>
        </Group>
        <Collapse aria-label="Réduire le ruban"><Icon w={10} h={8} c="#888" sw={1.5}><path d="M1 6l4-4 4 4" /></Icon></Collapse>
      </Ribbon>

      <Work>
        <LeftBar>
          <ToolGrid>
            {tools.map((t) => (
              <Tool key={t.name} aria-label={t.name} $on={t.on} $off={t.off}><Icon w={30} c="#000">{t.art}</Icon></Tool>
            ))}
          </ToolGrid>
          <PictureTool $on aria-label="Réglementation"><Mosaic w={20} /></PictureTool>
        </LeftBar>
        <Center>
          <Canvas>
            <FloorPlan />
            <North>N<Icon w={16} h={61} c="#000"><path d="M8 1v60M1 9l7-8 7 8" /></Icon></North>
            <Panel>
              <PanelHead>
                <PanelTitle htmlFor="other-level">Autre niveau affiché</PanelTitle>
                <PanelClose aria-label="Fermer">x</PanelClose>
              </PanelHead>
              <SelectWrap>
                <Select id="other-level" defaultValue="R+1"><option>R+1</option></Select>
                <Icon w={10} h={6} c="#555" sw={1}><path d="M1 .500l4 4 4-4" /></Icon>
              </SelectWrap>
            </Panel>
          </Canvas>
          <TabStrip>
            {tabs.map((t) => <Tab key={t.label} $on={t.on}>{t.icon}{t.label}</Tab>)}
          </TabStrip>
        </Center>
        <RightBar>
          {options.map((o) => (
            <Option key={o.name} aria-label={o.name} $on={o.on}><Icon w={20} c="#000">{o.art}</Icon></Option>
          ))}
        </RightBar>
      </Work>

      <StatusBar>
        <StatusCell $w={200} $bold $rule>943 points / 1186 segments</StatusCell>
        <StatusCell $w={120}>(-235656 ; -205838</StatusCell>
        <StatusCell $w={80} $bold $rule>Tracé libre</StatusCell>
        <StatusCell $bold $green $rule>Plan analysé</StatusCell>
        <StatusZoom>
          <PlainButton aria-label="Zoom avant"><ZoomIcon plus /></PlainButton>
          <PlainButton aria-label="Zoom arrière"><ZoomIcon /></PlainButton>
        </StatusZoom>
      </StatusBar>
    </Shell>
  );
}
